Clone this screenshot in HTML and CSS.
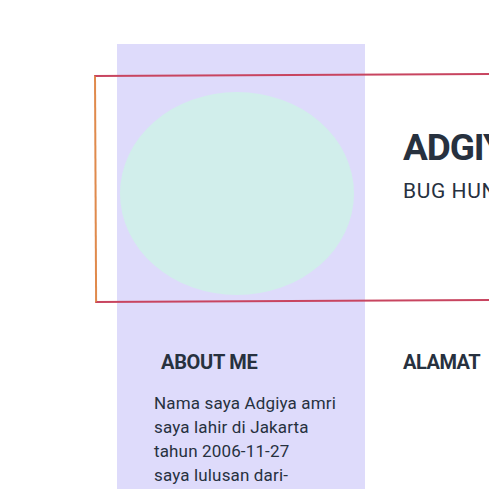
FILE: index.html
```html
<!DOCTYPE html>
<html lang="id">
<head>
<meta charset="utf-8">
<title>Adgiya</title>
<link rel="stylesheet" href="styles.css">
</head>
<body>
<div class="page">
  <div class="frame"></div>
  <div class="grid">
    <aside class="side">
      <div class="photo"></div>
      <h2 class="about-title">ABOUT ME</h2>
      <p class="about-text">Nama saya Adgiya amri<br>saya lahir di Jakarta<br>tahun 2006-11-27<br>saya lulusan dari-</p>
    </aside>
    <section class="main">
      <div class="head">
        <h1 class="name">ADGIYA AMRI</h1>
        <p class="role">BUG HUNTER</p>
      </div>
      <h2 class="addr-title">ALAMAT</h2>
    </section>
  </div>
</div>
</body>
</html>
```
FILE: styles.css
```css
* { box-sizing: border-box; }
html, body { margin: 0; padding: 0; overflow: hidden; }
body {
  font-family: Roboto, "Liberation Sans", sans-serif;
  color: #27313f;
  background: #ffffff;
}
.page {
  position: relative;
  width: 489px;
  height: 489px;
  overflow: hidden;
  padding: 44px 0 0 117px;
}
.frame {
  position: absolute;
  left: 94px;
  top: 75px;
  width: 600px;
  height: 228px;
  border-top: 2px solid #c84560;
  border-bottom: 2px solid #c84560;
  border-left: 2px solid #e08a4c;
  transform: rotate(-0.28deg);
  transform-origin: 0 0;
  z-index: 2;
}
.grid {
  display: grid;
  grid-template-columns: 248px 1fr;
  column-gap: 38px;
  height: 100%;
}
.side {
  background: #dedbfb;
  padding: 48px 0 0 3px;
}
.photo {
  width: 234px;
  height: 203px;
  border-radius: 50%;
  background: #d1eeeb;
}
.about-title {
  margin: 55px 0 0 41px;
  font-size: 20px;
  font-weight: 700;
  line-height: 24px;
  letter-spacing: -0.3px;
}
.about-text {
  margin: 17px 0 0 34px;
  font-size: 17px;
  line-height: 24px;
  letter-spacing: 0.15px;
}
.main {
  white-space: nowrap;
}
.head {
  padding-top: 82px;
  height: 293px;
}
.name {
  margin: 0;
  font-size: 37px;
  font-weight: 700;
  line-height: 44px;
  letter-spacing: -1.1px;
}
.role {
  margin: 9px 0 0;
  font-size: 21px;
  line-height: 24px;
  letter-spacing: 0.6px;
}
.addr-title {
  margin: 13px 0 0;
  font-size: 20px;
  font-weight: 700;
  line-height: 24px;
  letter-spacing: -0.5px;
}
```
